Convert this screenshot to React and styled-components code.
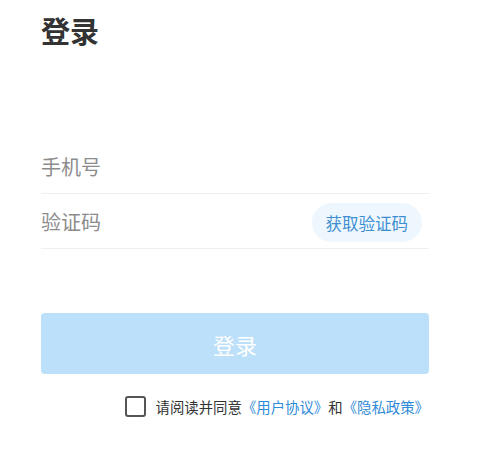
import React, { useState } from 'react'
import styled, { createGlobalStyle } from 'styled-components'

const GlobalStyle = createGlobalStyle`
  body {
    margin: 0;
    background: #fff;
    font-family: "Noto Sans CJK SC", "Noto Sans", sans-serif;
  }
`

const Page = styled.div`
  width: 388px;
  padding: 10px 66px 0 41px;
  display: flex;
  flex-direction: column;
`

const Title = styled.h1`
  margin: 0;
  font-size: 29px;
  line-height: 40px;
  font-weight: 700;
  color: #333;
`

const Form = styled.div`
  margin-top: 89px;
  display: flex;
  flex-direction: column;
`

const Row = styled.div`
  height: 54px;
  display: flex;
  align-items: center;
  justify-content: space-between;
  border-bottom: 1px solid #efefef;
`

const Input = styled.input`
  flex: 1;
  min-width: 0;
  border: none;
  outline: none;
  padding: 0;
  background: transparent;
  font-family: inherit;
  font-size: 20px;
  color: #333;

  &::placeholder {
    color: #8c8c8c;
  }
`

const CodeButton = styled.button`
  height: 39px;
  padding: 0 14px;
  margin: 3px 7px 0 0;
  border: none;
  border-radius: 20px;
  background: #eff7fe;
  color: #3d8fd2;
  font-family: inherit;
  font-size: 16.5px;
`

const SubmitButton = styled.button`
  margin-top: 64px;
  height: 61px;
  border: none;
  border-radius: 4px;
  background: #bcdffa;
  color: #fff;
  font-family: inherit;
  font-size: 22px;
`

const Agreement = styled.label`
  margin-top: 22px;
  display: flex;
  align-items: center;
  justify-content: flex-end;
  gap: 10px;
  font-size: 14.4px;
  color: #333;
`

const Box = styled.span`
  width: 17px;
  height: 17px;
  border: 2.5px solid ${p => (p.checked ? '#3d8fd2' : '#555')};
  border-radius: 3px;
  box-sizing: content-box;
`

const Link = styled.span`
  color: #2f8bd8;
`

export default function App() {
  const [checked, setChecked] = useState(false)

  return (
    <Page>
      <GlobalStyle />
      <Title>登录</Title>
      <Form>
        <Row>
          <Input placeholder="手机号" />
        </Row>
        <Row>
          <Input placeholder="验证码" />
          <CodeButton>获取验证码</CodeButton>
        </Row>
        <SubmitButton>登录</SubmitButton>
        <Agreement onClick={() => setChecked(!checked)}>
          <Box checked={checked} />
          <span>
            请阅读并同意<Link>《用户协议》</Link>和<Link>《隐私政策》</Link>
          </span>
        </Agreement>
      </Form>
    </Page>
  )
}
